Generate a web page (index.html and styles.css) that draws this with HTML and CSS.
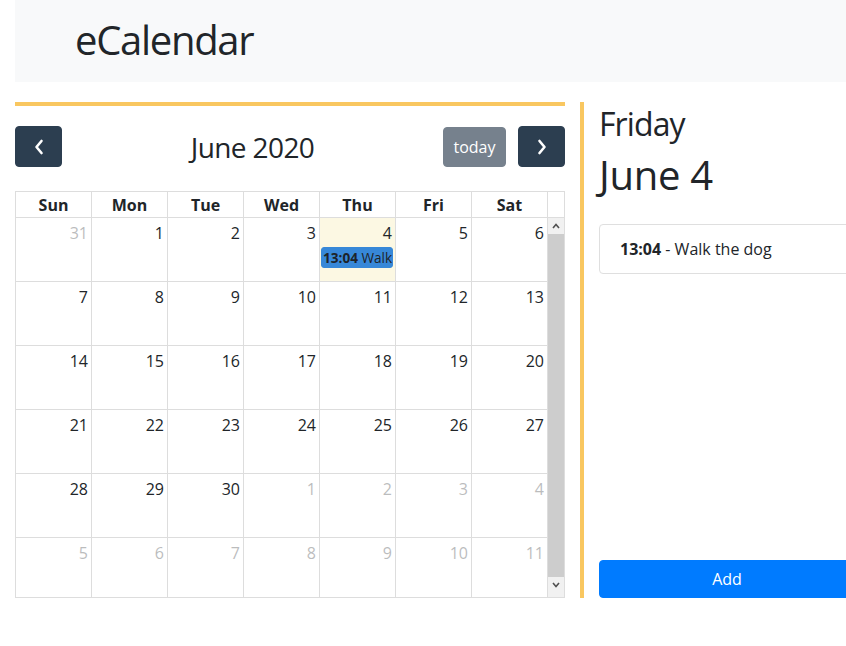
FILE: index.html
```html
<!DOCTYPE html>
<html lang="en">
<head>
<meta charset="utf-8">
<title>eCalendar</title>
<link rel="stylesheet" href="styles.css">
</head>
<body>
<div class="page">
  <header class="header">
    <h1 class="brand">eCalendar</h1>
  </header>
  <main class="main">
    <section class="calendar">
      <div class="toolbar">
        <button class="fc-btn" aria-label="prev">
          <svg width="12" height="16" viewBox="0 0 12 16"><polyline points="8.5,2 3.5,8 8.5,14" fill="none" stroke="#fff" stroke-width="2.6" stroke-linecap="round" stroke-linejoin="round"/></svg>
        </button>
        <h2 class="title">June 2020</h2>
        <div class="btn-group">
          <button class="fc-btn today">today</button>
          <button class="fc-btn" aria-label="next">
            <svg width="12" height="16" viewBox="0 0 12 16"><polyline points="3.5,2 8.5,8 3.5,14" fill="none" stroke="#fff" stroke-width="2.6" stroke-linecap="round" stroke-linejoin="round"/></svg>
          </button>
        </div>
      </div>
      <div class="view">
        <div class="head">
          <div class="dow">Sun</div><div class="dow">Mon</div><div class="dow">Tue</div><div class="dow">Wed</div><div class="dow">Thu</div><div class="dow">Fri</div><div class="dow">Sat</div><div class="spacer"></div>
        </div>
        <div class="body">
          <div class="weeks">
            <div class="week">
              <div class="day other"><span class="num">31</span></div>
              <div class="day"><span class="num">1</span></div>
              <div class="day"><span class="num">2</span></div>
              <div class="day"><span class="num">3</span></div>
              <div class="day today-cell"><span class="num">4</span><div class="event"><b>13:04</b> Walk the dog</div></div>
              <div class="day"><span class="num">5</span></div>
              <div class="day"><span class="num">6</span></div>
            </div>
            <div class="week">
              <div class="day"><span class="num">7</span></div>
              <div class="day"><span class="num">8</span></div>
              <div class="day"><span class="num">9</span></div>
              <div class="day"><span class="num">10</span></div>
              <div class="day"><span class="num">11</span></div>
              <div class="day"><span class="num">12</span></div>
              <div class="day"><span class="num">13</span></div>
            </div>
            <div class="week">
              <div class="day"><span class="num">14</span></div>
              <div class="day"><span class="num">15</span></div>
              <div class="day"><span class="num">16</span></div>
              <div class="day"><span class="num">17</span></div>
              <div class="day"><span class="num">18</span></div>
              <div class="day"><span class="num">19</span></div>
              <div class="day"><span class="num">20</span></div>
            </div>
            <div class="week">
              <div class="day"><span class="num">21</span></div>
              <div class="day"><span class="num">22</span></div>
              <div class="day"><span class="num">23</span></div>
              <div class="day"><span class="num">24</span></div>
              <div class="day"><span class="num">25</span></div>
              <div class="day"><span class="num">26</span></div>
              <div class="day"><span class="num">27</span></div>
            </div>
            <div class="week">
              <div class="day"><span class="num">28</span></div>
              <div class="day"><span class="num">29</span></div>
              <div class="day"><span class="num">30</span></div>
              <div class="day other"><span class="num">1</span></div>
              <div class="day other"><span class="num">2</span></div>
              <div class="day other"><span class="num">3</span></div>
              <div class="day other"><span class="num">4</span></div>
            </div>
            <div class="week">
              <div class="day other"><span class="num">5</span></div>
              <div class="day other"><span class="num">6</span></div>
              <div class="day other"><span class="num">7</span></div>
              <div class="day other"><span class="num">8</span></div>
              <div class="day other"><span class="num">9</span></div>
              <div class="day other"><span class="num">10</span></div>
              <div class="day other"><span class="num">11</span></div>
            </div>
          </div>
          <div class="scrollbar">
            <div class="sb-btn">
              <svg width="8" height="6" viewBox="0 0 8 6"><polyline points="1,5 4,1.5 7,5" fill="none" stroke="#505050" stroke-width="1.6"/></svg>
            </div>
            <div class="sb-thumb"></div>
            <div class="sb-btn">
              <svg width="8" height="6" viewBox="0 0 8 6"><polyline points="1,1 4,4.5 7,1" fill="none" stroke="#505050" stroke-width="1.6"/></svg>
            </div>
            <div class="sb-rest"></div>
          </div>
        </div>
      </div>
    </section>
    <aside class="daypanel">
      <h2 class="weekday">Friday</h2>
      <h1 class="date">June 4</h1>
      <ul class="list">
        <li class="list-item"><b>13:04</b> - Walk the dog</li>
      </ul>
      <button class="add-btn">Add</button>
    </aside>
  </main>
</div>
</body>
</html>
```

FILE: styles.css
```css
html, body {
  margin: 0;
  padding: 0;
  overflow: hidden;
  background: #fff;
}

body {
  font-family: "Open Sans", "Noto Sans", sans-serif;
  font-size: 16px;
  line-height: 1.5;
  color: #212529;
}

.page {
  width: 840px;
  padding: 0 15px;
}

.header {
  background: #f8f9fa;
  height: 82px;
  padding: 0 0 0 60px;
  box-sizing: border-box;
  display: flex;
  align-items: center;
}

.brand {
  margin: -3px 0 0;
  font-size: 40px;
  font-weight: 400;
  line-height: 48px;
  letter-spacing: -1.3px;
}

.main {
  display: flex;
  margin-top: 20px;
  height: 496px;
}

/* calendar */
.calendar {
  width: 550px;
  flex: none;
  border-top: 4px solid #f9c760;
  padding-top: 20px;
  margin-right: 15px;
  display: flex;
  flex-direction: column;
}

.toolbar {
  display: flex;
  justify-content: space-between;
  align-items: center;
  height: 41px;
  margin-bottom: 24px;
}

.btn-group {
  display: flex;
  align-items: center;
}

.fc-btn {
  height: 41px;
  width: 47px;
  border: 1px solid #2c3e50;
  background: #2c3e50;
  border-radius: 4px;
  padding: 0;
  display: flex;
  align-items: center;
  justify-content: center;
  color: #fff;
  font-family: inherit;
  font-size: 16px;
}

.fc-btn.today {
  width: 63px;
  height: 40px;
  background: #76818d;
  border-color: #76818d;
  margin-right: 12px;
}

.title {
  margin: 2px 0 0;
  font-size: 28px;
  font-weight: 400;
  line-height: 1.2;
  letter-spacing: -0.6px;
}

.view {
  border: 1px solid #ddd;
  flex: 1;
  display: flex;
  flex-direction: column;
  min-height: 0;
}

.head {
  display: grid;
  grid-template-columns: repeat(7, 76px) 16px;
  height: 25px;
  border-bottom: 1px solid #ddd;
}

.dow {
  border-right: 1px solid #ddd;
  text-align: center;
  font-weight: 700;
  line-height: 27px;
  height: 25px;
}

.body {
  flex: 1;
  display: flex;
  min-height: 0;
  overflow: hidden;
}

.weeks {
  width: 532px;
  flex: none;
}

.week {
  display: grid;
  grid-template-columns: repeat(7, 76px);
  height: 64px;
  border-bottom: 1px solid #ddd;
  box-sizing: border-box;
}

.day {
  border-right: 1px solid #ddd;
  min-width: 0;
  overflow: hidden;
}

.today-cell {
  background: #fcf8e3;
}

.num {
  display: block;
  text-align: right;
  padding: 3px 3px 0 0;
  line-height: 24px;
}

.other .num {
  opacity: 0.3;
}

.event {
  margin: 2px 2px 0 1px;
  background: #3788d8;
  border: 1px solid #3788d8;
  border-radius: 3px;
  font-size: 13.6px;
  line-height: 19px;
  color: #1d2329;
  white-space: nowrap;
  overflow: hidden;
  padding-left: 1px;
}

.scrollbar {
  width: 16px;
  flex: none;
  background: #f1f1f1;
  display: flex;
  flex-direction: column;
}

.sb-btn {
  height: 16px;
  display: flex;
  align-items: center;
  justify-content: center;
  flex: none;
}

.sb-thumb {
  height: 343px;
  background: #cdcdcd;
  flex: none;
}

.sb-rest {
  flex: 1;
}

/* right panel */
.daypanel {
  flex: none;
  width: 256px;
  border-left: 4px solid #f9c760;
  padding-left: 15px;
  display: flex;
  flex-direction: column;
}

.weekday {
  margin: 3px 0 8px;
  font-size: 32px;
  font-weight: 400;
  line-height: 1.2;
  letter-spacing: -0.9px;
}

.date {
  margin: 0 0 8px;
  font-size: 40px;
  font-weight: 400;
  line-height: 1.2;
  letter-spacing: -0.3px;
}

.list {
  list-style: none;
  margin: 17px 0 0;
  padding: 0;
}

.list-item {
  border: 1px solid #dfdfdf;
  border-radius: 4px;
  padding: 12px 20px;
  line-height: 24px;
  white-space: nowrap;
}

.add-btn {
  margin-top: auto;
  height: 38px;
  width: 256px;
  background: #007bff;
  border: 1px solid #007bff;
  border-radius: 4px;
  color: #fff;
  font-family: inherit;
  font-size: 16px;
  padding: 0;
}
```
